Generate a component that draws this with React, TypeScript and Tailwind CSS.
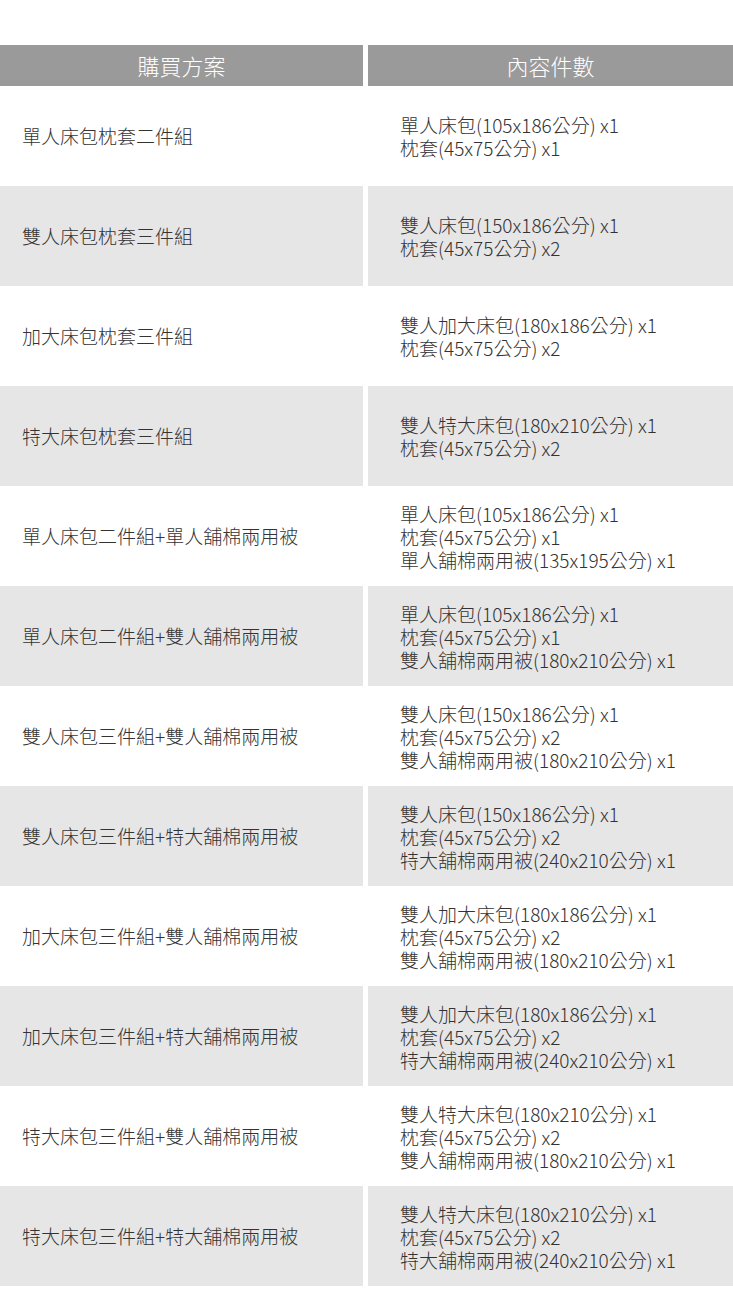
const FONT = '"Noto Sans CJK TC", "Noto Sans", sans-serif';

const ROWS: { plan: string; items: string[] }[] = [
  { plan: '單人床包枕套二件組', items: ['單人床包(105x186公分) x1', '枕套(45x75公分) x1'] },
  { plan: '雙人床包枕套三件組', items: ['雙人床包(150x186公分) x1', '枕套(45x75公分) x2'] },
  { plan: '加大床包枕套三件組', items: ['雙人加大床包(180x186公分) x1', '枕套(45x75公分) x2'] },
  { plan: '特大床包枕套三件組', items: ['雙人特大床包(180x210公分) x1', '枕套(45x75公分) x2'] },
  {
    plan: '單人床包二件組+單人舖棉兩用被',
    items: ['單人床包(105x186公分) x1', '枕套(45x75公分) x1', '單人舖棉兩用被(135x195公分) x1'],
  },
  {
    plan: '單人床包二件組+雙人舖棉兩用被',
    items: ['單人床包(105x186公分) x1', '枕套(45x75公分) x1', '雙人舖棉兩用被(180x210公分) x1'],
  },
  {
    plan: '雙人床包三件組+雙人舖棉兩用被',
    items: ['雙人床包(150x186公分) x1', '枕套(45x75公分) x2', '雙人舖棉兩用被(180x210公分) x1'],
  },
  {
    plan: '雙人床包三件組+特大舖棉兩用被',
    items: ['雙人床包(150x186公分) x1', '枕套(45x75公分) x2', '特大舖棉兩用被(240x210公分) x1'],
  },
  {
    plan: '加大床包三件組+雙人舖棉兩用被',
    items: ['雙人加大床包(180x186公分) x1', '枕套(45x75公分) x2', '雙人舖棉兩用被(180x210公分) x1'],
  },
  {
    plan: '加大床包三件組+特大舖棉兩用被',
    items: ['雙人加大床包(180x186公分) x1', '枕套(45x75公分) x2', '特大舖棉兩用被(240x210公分) x1'],
  },
  {
    plan: '特大床包三件組+雙人舖棉兩用被',
    items: ['雙人特大床包(180x210公分) x1', '枕套(45x75公分) x2', '雙人舖棉兩用被(180x210公分) x1'],
  },
  {
    plan: '特大床包三件組+特大舖棉兩用被',
    items: ['雙人特大床包(180x210公分) x1', '枕套(45x75公分) x2', '特大舖棉兩用被(240x210公分) x1'],
  },
];

export default function App() {
  return (
    <div className="w-[733px] h-[1289px] bg-white pt-[45px]" style={{ fontFamily: FONT }}>
      {/* header */}
      <div className="grid grid-cols-[363px_365px] gap-x-[5px] h-[41px]">
        <div className="bg-[#9a9a9a] flex items-center justify-center text-white text-[22px] font-light">購買方案</div>
        <div className="bg-[#9a9a9a] flex items-center justify-center text-white text-[22px] font-light">內容件數</div>
      </div>

      {ROWS.map((row, i) => {
        const bg = i % 2 === 1 ? 'bg-[#e6e6e6]' : 'bg-white';
        return (
          <div key={i} className="grid grid-cols-[363px_365px] gap-x-[5px] h-[100px] text-[#333] font-light">
            <div className={`${bg} flex items-center pl-[22px] text-[19px]`}>{row.plan}</div>
            <div className={`${bg} flex flex-col justify-center pl-[32px] text-[19px] leading-[23px]`}>
              {row.items.map((t, j) => (
                <div key={j}>{t}</div>
              ))}
            </div>
          </div>
        );
      })}
    </div>
  );
}
